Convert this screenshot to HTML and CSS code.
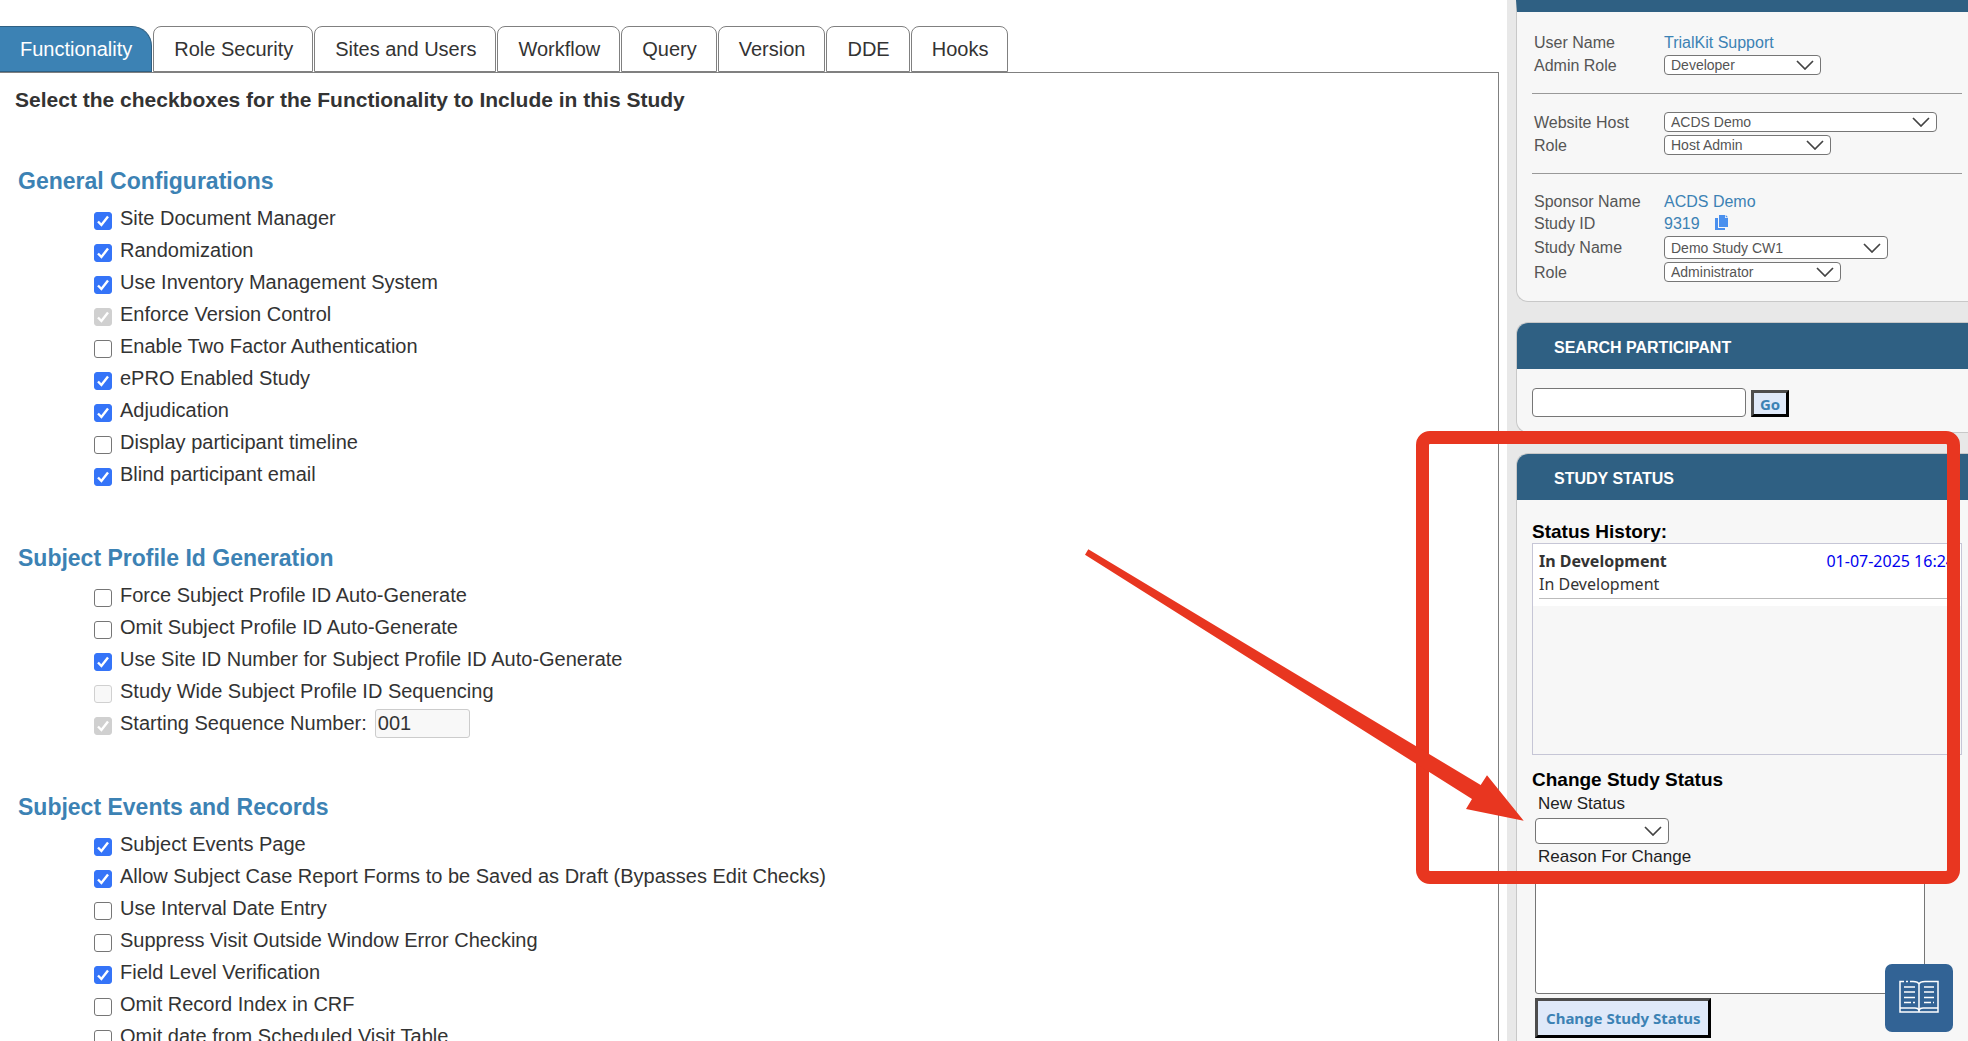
FILE: index.html
```
<!DOCTYPE html>
<html lang="en">
<head>
    <meta charset="UTF-8">
    <meta name="viewport" content="width=device-width, initial-scale=1.0">
    <title>Study Configuration</title>
    <link rel="stylesheet" href="styles.css">
</head>
<body>
    <div class="page">
        <main class="main">
            <nav class="tabs">
                <button class="tab active">Functionality</button>
                <button class="tab">Role Security</button>
                <button class="tab">Sites and Users</button>
                <button class="tab">Workflow</button>
                <button class="tab">Query</button>
                <button class="tab">Version</button>
                <button class="tab">DDE</button>
                <button class="tab">Hooks</button>
            </nav>

            <div class="panel">
                <h1>Select the checkboxes for the Functionality to Include in this Study</h1>

                <section class="options">
                    <h2>General Configurations</h2>
                    <label><input type="checkbox" checked>Site Document Manager</label>
                    <label><input type="checkbox" checked>Randomization</label>
                    <label><input type="checkbox" checked>Use Inventory Management System</label>
                    <label><input type="checkbox" checked disabled>Enforce Version Control</label>
                    <label><input type="checkbox">Enable Two Factor Authentication</label>
                    <label><input type="checkbox" checked>ePRO Enabled Study</label>
                    <label><input type="checkbox" checked>Adjudication</label>
                    <label><input type="checkbox">Display participant timeline</label>
                    <label><input type="checkbox" checked>Blind participant email</label>
                </section>

                <section class="options">
                    <h2>Subject Profile Id Generation</h2>
                    <label><input type="checkbox">Force Subject Profile ID Auto-Generate</label>
                    <label><input type="checkbox">Omit Subject Profile ID Auto-Generate</label>
                    <label><input type="checkbox" checked>Use Site ID Number for Subject Profile ID Auto-Generate</label>
                    <label><input type="checkbox" disabled>Study Wide Subject Profile ID Sequencing</label>
                    <div class="option-row">
                        <label><input type="checkbox" checked disabled>Starting Sequence Number:</label>
                        <input type="text" class="sequence" value="001" aria-label="Starting Sequence Number" disabled>
                    </div>
                </section>

                <section class="options">
                    <h2>Subject Events and Records</h2>
                    <label><input type="checkbox" checked>Subject Events Page</label>
                    <label><input type="checkbox" checked>Allow Subject Case Report Forms to be Saved as Draft (Bypasses Edit Checks)</label>
                    <label><input type="checkbox">Use Interval Date Entry</label>
                    <label><input type="checkbox">Suppress Visit Outside Window Error Checking</label>
                    <label><input type="checkbox" checked>Field Level Verification</label>
                    <label><input type="checkbox">Omit Record Index in CRF</label>
                    <label><input type="checkbox">Omit date from Scheduled Visit Table</label>
                </section>
            </div>
        </main>

        <aside class="sidebar">
            <div class="card user-card">
                <div class="info">
                    <span>User Name</span>
                    <a href="#">TrialKit Support</a>
                    <label for="adminRole">Admin Role</label>
                    <select id="adminRole" class="w-developer"><option>Developer</option></select>
                </div>
                <hr>
                <div class="info">
                    <label for="host">Website Host</label>
                    <select id="host" class="w-host"><option>ACDS Demo</option></select>
                    <label for="hostRole">Role</label>
                    <select id="hostRole" class="w-host-role"><option>Host Admin</option></select>
                </div>
                <hr>
                <div class="info">
                    <span>Sponsor Name</span>
                    <a href="#">ACDS Demo</a>
                    <span>Study ID</span>
                    <div class="study-id">
                        <a href="#">9319</a>
                        <button class="copy" aria-label="Copy study ID">
                            <svg width="14" height="15" viewBox="0 0 14 15">
                                <path d="M4 0h6v3h3v9H4z" fill="#4a90ee"/>
                                <path d="M10.700 0L13 2.300H10.700z" fill="#4a90ee"/>
                                <path d="M0 3h3v10h7v2H0z" fill="#4a90ee"/>
                            </svg>
                        </button>
                    </div>
                    <label for="studyName">Study Name</label>
                    <select id="studyName" class="w-study"><option>Demo Study CW1</option></select>
                    <label for="studyRole">Role</label>
                    <select id="studyRole" class="w-study-role"><option>Administrator</option></select>
                </div>
            </div>

            <div class="card">
                <h3>SEARCH PARTICIPANT</h3>
                <div class="search">
                    <input type="text" aria-label="Search participant">
                    <button class="btn">Go</button>
                </div>
            </div>

            <div class="card status-card">
                <h3>STUDY STATUS</h3>
                <div class="status">
                    <h4>Status History:</h4>
                    <div class="history">
                        <div class="entry">
                            <div class="entry-body">
                                <div class="entry-head">
                                    <b>In Development</b>
                                    <span class="date">01-07-2025 16:24</span>
                                </div>
                                <div>In Development</div>
                            </div>
                        </div>
                    </div>
                    <h4>Change Study Status</h4>
                    <div class="change">
                        <label for="newStatus">New Status</label>
                        <select id="newStatus"><option></option></select>
                        <label for="reason">Reason For Change</label>
                        <textarea id="reason"></textarea>
                        <button class="btn btn-big">Change Study Status</button>
                    </div>
                </div>

                <!-- highlight box and arrow over the status form -->
                <div class="highlight"></div>
                <svg class="arrow" width="440" height="280" viewBox="0 0 440 280">
                    <path d="M3.3 1.3L395.7 237L402 227.3L438.7 272.7L381 261L387 251L0 6.7z" fill="#e83620"/>
                </svg>
            </div>
        </aside>
    </div>

    <button class="help" aria-label="Help">
        <svg width="40" height="34" viewBox="0 0 40 34" fill="none" stroke="#fff" stroke-width="1.5">
            <path d="M5 1.500H1V32H39V1.500H26Q21 1.500 20 4V32M20 4Q19 1.500 14 1.500H11M7 1.500H9"/>
            <path d="M1 28H16Q19 28 20 30Q21 28 24 28H39"/>
            <path d="M5 7H16M5 12H16M5 17.500H16M5 22.500H12M14 22.500H16M25 7H35M25 12H35M25 17.500H35M25 22.500H32M34 22.500H35"/>
        </svg>
    </button>
</body>
</html>
```
FILE: styles.css
```
* {
    box-sizing: border-box;
}

body {
    margin: 0;
    height: 100vh;
    overflow: hidden;
    font-family: "Liberation Sans", Arial, sans-serif;
    font-size: 20px;
    color: #333;
    background: #fff;
}

h1, h2, h3, h4 {
    margin: 0;
}

button, input, select, textarea {
    font-family: inherit;
    margin: 0;
}

a {
    color: #3c82b4;
    text-decoration: none;
}

.page {
    display: flex;
    height: 100vh;
    overflow: hidden;
}

/* Left side */
.main {
    flex: 1;
    display: flex;
    flex-direction: column;
    padding: 26px 8px 0 0;
    min-width: 0;
}

.tabs {
    display: flex;
    gap: 1px;
}

.tab {
    height: 46px;
    padding: 0 19px 0 20px;
    font-size: 20px;
    color: #333;
    background: #fff;
    border: 1px solid #808080;
    border-radius: 8px 8px 0 0;
    cursor: pointer;
}

.tab.active {
    color: #fff;
    background: #3c82b4;
    border-color: #2f6083;
    border-left: none;
    border-radius: 0 20px 0 0;
}

.panel {
    flex: 1;
    border-top: 1px solid #808080;
    border-right: 1px solid #808080;
    padding: 10px 15px;
}

.panel h1 {
    font-size: 21px;
    line-height: 34px;
    margin-bottom: 46px;
}

.options {
    display: flex;
    flex-direction: column;
    margin-bottom: 50px;
}

.options h2 {
    font-size: 23px;
    line-height: 36px;
    margin-bottom: 3px;
    color: #3c82b4;
    padding-left: 3px;
}

.options label {
    display: flex;
    align-items: center;
    gap: 8px;
    line-height: 32px;
    padding-left: 79px;
}

.options input[type="checkbox"] {
    appearance: none;
    width: 18px;
    height: 18px;
    margin-top: 5px;
    border: 1px solid #767676;
    border-radius: 3px;
    background: #fff;
}

.options input[type="checkbox"]:checked {
    border-color: #3574f8;
    background: #3574f8 url("data:image/svg+xml,%3Csvg xmlns='http://www.w3.org/2000/svg' viewBox='0 0 16 16'%3E%3Cpath d='M3 8.5l3.4 3.5L13 3.5' fill='none' stroke='white' stroke-width='2.4'/%3E%3C/svg%3E") center / 16px no-repeat;
}

.options input[type="checkbox"]:disabled {
    border-color: #d0d0d0;
    background-color: #f8f8f8;
}

.options input[type="checkbox"]:checked:disabled {
    background-color: #d0d0d0;
}

.option-row {
    display: flex;
    align-items: center;
    gap: 8px;
    height: 32px;
}

.sequence {
    width: 95px;
    height: 29px;
    padding: 0 2px;
    font-size: 20px;
    color: #333;
    background: #f8f8f8;
    border: 1px solid #ccc;
    border-radius: 3px;
}

/* Right side */
.sidebar {
    width: 461px;
    flex-shrink: 0;
    padding-left: 9px;
    background: #e8e8e8;
}

.card {
    position: relative;
    margin-bottom: 20px;
    background: #f7f7f7;
    border: 1px solid #c8c8c8;
    border-right: none;
    border-radius: 12px 0 0 12px;
}

.card h3 {
    padding: 3px 0 0 37px;
    font-size: 16px;
    line-height: 43px;
    color: #fff;
    background: #2f6083;
    border-radius: 11px 0 0 0;
}

.user-card {
    border-top: 12px solid #2f6083;
    border-radius: 0 0 0 12px;
    padding: 20px 6px 17px 15px;
    font-size: 16px;
    line-height: 18px;
    color: #555;
}

.user-card hr {
    height: 1px;
    margin: 16px 0 17px;
    border: none;
    background: #999;
}

.info {
    display: grid;
    grid-template-columns: 130px 1fr;
    grid-auto-rows: minmax(22px, auto);
    align-items: center;
    padding-left: 2px;
}

.study-id {
    display: flex;
    align-items: center;
    gap: 15px;
}

.copy {
    padding: 0 0 3px;
    border: none;
    background: none;
    line-height: 0;
    cursor: pointer;
}

select {
    appearance: none;
    height: 20px;
    margin: 1px 0 2px;
    padding: 0 6px;
    font-size: 14px;
    color: #555;
    border: 1px solid #767676;
    border-radius: 4px;
    background: #fff url("data:image/svg+xml,%3Csvg xmlns='http://www.w3.org/2000/svg' viewBox='0 0 18 10'%3E%3Cpath d='M1 1l8 8 8-8' fill='none' stroke='%23444' stroke-width='1.7'/%3E%3C/svg%3E") right 6px center / 18px 10px no-repeat;
}

.w-developer {
    width: 157px;
}

.w-host {
    width: 273px;
}

.w-host-role {
    width: 167px;
}

.w-study {
    width: 224px;
    height: 23px;
}

.w-study-role {
    width: 177px;
}

.search {
    display: flex;
    align-items: flex-end;
    gap: 5px;
    padding: 19px 15px 15px;
}

.search input {
    width: 214px;
    height: 29px;
    border: 1px solid #767676;
    border-radius: 4px;
}

.btn {
    height: 27px;
    padding: 0 6px;
    font-family: "Noto Sans", sans-serif;
    font-size: 15px;
    font-weight: bold;
    line-height: 20px;
    color: #3c82b4;
    background: #dfe9f9;
    border: 3px solid;
    border-color: #4d4d4d #000 #000 #4d4d4d;
    cursor: pointer;
}

.btn-big {
    height: 40px;
    padding: 0 8px;
}

.status-card {
    margin-bottom: 0;
    height: 600px;
}

.status {
    padding: 21px 6px 0 15px;
}

.status h4 {
    font-size: 19px;
    line-height: 22px;
    color: #000;
}

.history {
    height: 212px;
    margin-bottom: 14px;
    border: 1px solid #c6c6d6;
    font-family: "Noto Sans", sans-serif;
    font-size: 16px;
    line-height: 23px;
}

.entry {
    padding: 6px 6px 7px;
    background: #fff;
}

.entry-body {
    padding-bottom: 2px;
    border-bottom: 1px solid #bbb;
}

.entry-head {
    display: flex;
    justify-content: space-between;
}

.date {
    color: #0000ee;
}

.change {
    display: flex;
    flex-direction: column;
    align-items: flex-start;
    padding-left: 3px;
}

.change label {
    padding-left: 3px;
    font-size: 17px;
    line-height: 26px;
    color: #222;
}

.change select {
    width: 134px;
    height: 26px;
    margin: 1px 0 0;
}

.change textarea {
    width: 390px;
    height: 120px;
    margin: 4px 0;
    border: 1px solid #767676;
    border-radius: 3px;
    resize: none;
}

.highlight {
    position: absolute;
    top: -23px;
    left: -101px;
    width: 544px;
    height: 453px;
    border: 13px solid #e83620;
    border-radius: 14px;
    pointer-events: none;
}

.arrow {
    position: absolute;
    top: 94px;
    left: -432px;
    pointer-events: none;
}

.help {
    position: fixed;
    right: 15px;
    bottom: 9px;
    width: 68px;
    height: 68px;
    padding: 0;
    border: none;
    border-radius: 7px;
    background: #326395;
    cursor: pointer;
}
```
